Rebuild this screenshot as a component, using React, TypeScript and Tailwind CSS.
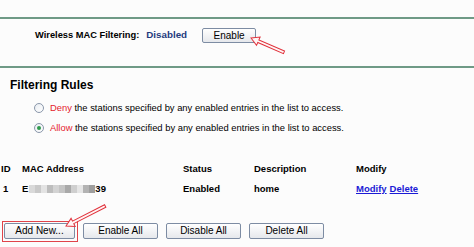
import React from "react";

const Btn = ({ children, className = "" }: { children: React.ReactNode; className?: string }) => (
  <div
    className={`flex items-center justify-center border border-[#7d8ca3] rounded-[2px] bg-gradient-to-b from-[#ffffff] to-[#e6e8ec] text-[10px] text-black leading-none ${className}`}
  >
    {children}
  </div>
);

const Radio = ({ checked }: { checked?: boolean }) => (
  <div className="w-[10px] h-[10px] rounded-full border border-[#8a97aa] bg-gradient-to-br from-[#e9edf2] to-white flex items-center justify-center">
    {checked && <div className="w-[4px] h-[4px] rounded-full bg-[#2f9a4c]" />}
  </div>
);

const pix = ["#d9d9d9", "#c9c9c9", "#e3e3e3", "#bdbdbd", "#d3d3d3", "#c4c4c4", "#a9a9a9", "#cfcfcf", "#e6e6e6", "#b3b3b3", "#9e9e9e"];

export default function App() {
  return (
    <div
      className="relative w-[474px] h-[247px] overflow-hidden bg-[#fcfcfc] text-black"
      style={{ fontFamily: '"Liberation Sans", Arial, sans-serif' }}
    >
      <div className="h-[17px]" />
      <div className="h-[2px] bg-[#6f9a86]" />
      <div className="flex items-center h-[29px] mt-[2px]">
        <span className="ml-[35px] text-[9.3px] font-bold">Wireless MAC Filtering:</span>
        <span className="ml-[7px] text-[9.8px] font-bold text-[#1f3b7e]">Disabled</span>
        <Btn className="ml-[15px] w-[54px] h-[15px]">Enable</Btn>
      </div>
      <div className="h-[16px]" />
      <div className="h-[2px] bg-[#6f9a86]" />
      <div className="h-[34px] flex items-center pl-[10px] text-[12px] font-bold">Filtering Rules</div>
      <div className="flex flex-col pl-[34px] gap-[10px] text-[9.4px] leading-[10px] mt-[1px]">
        <div className="flex items-center gap-[6px]">
          <Radio />
          <span>
            <span className="text-[#e5222c]">Deny</span> the stations specified by any enabled entries in the list to access.
          </span>
        </div>
        <div className="flex items-center gap-[6px]">
          <Radio checked />
          <span>
            <span className="text-[#e5222c]">Allow</span> the stations specified by any enabled entries in the list to access.
          </span>
        </div>
      </div>
      <div className="h-[31px]" />
      <div className="grid grid-cols-[21px_161px_71px_102px_1fr] pl-[1px] text-[9.5px] font-bold leading-[10px] gap-y-[10px]">
        <div>ID</div>
        <div>MAC Address</div>
        <div>Status</div>
        <div>Description</div>
        <div>Modify</div>
        <div className="pl-[2px]">1</div>
        <div className="flex items-center">
          <span>E</span>
          <div className="flex h-[8px] ml-[1px]">
            {pix.map((c, i) => (
              <div key={i} className="w-[6px] h-[8px]" style={{ backgroundColor: c }} />
            ))}
          </div>
          <span>39</span>
        </div>
        <div>Enabled</div>
        <div>home</div>
        <div className="flex gap-[3px] text-[#1b1bd6] underline">
          <span>Modify</span>
          <span>Delete</span>
        </div>
      </div>
      <div className="flex gap-[8px] pl-[4px] mt-[29px]">
        <Btn className="w-[71px] h-[16px]">Add New...</Btn>
        <Btn className="w-[75px] h-[16px]">Enable All</Btn>
        <Btn className="w-[75px] h-[16px]">Disable All</Btn>
        <Btn className="w-[75px] h-[16px]">Delete All</Btn>
      </div>

      {/* red highlight and arrows */}
      <svg className="absolute left-0 top-0 pointer-events-none" width="474" height="247">
        <rect x="2.5" y="221.5" width="75" height="20" fill="none" stroke="#e0444a" strokeWidth="1" />
        <g transform="translate(251 38) rotate(23.6)">
          <polygon
            points="0,0 8,-4.5 8,-1.4 36,-1.4 36,1.4 8,1.4 8,4.5"
            fill="#fff5f5"
            stroke="#e0303a"
            strokeWidth="1"
            strokeLinejoin="miter"
          />
        </g>
        <g transform="translate(66 226) rotate(-27)">
          <polygon
            points="0,0 8,-4.5 8,-1.4 44,-1.4 44,1.4 8,1.4 8,4.5"
            fill="#fff5f5"
            stroke="#e0303a"
            strokeWidth="1"
            strokeLinejoin="miter"
          />
        </g>
      </svg>
    </div>
  );
}
